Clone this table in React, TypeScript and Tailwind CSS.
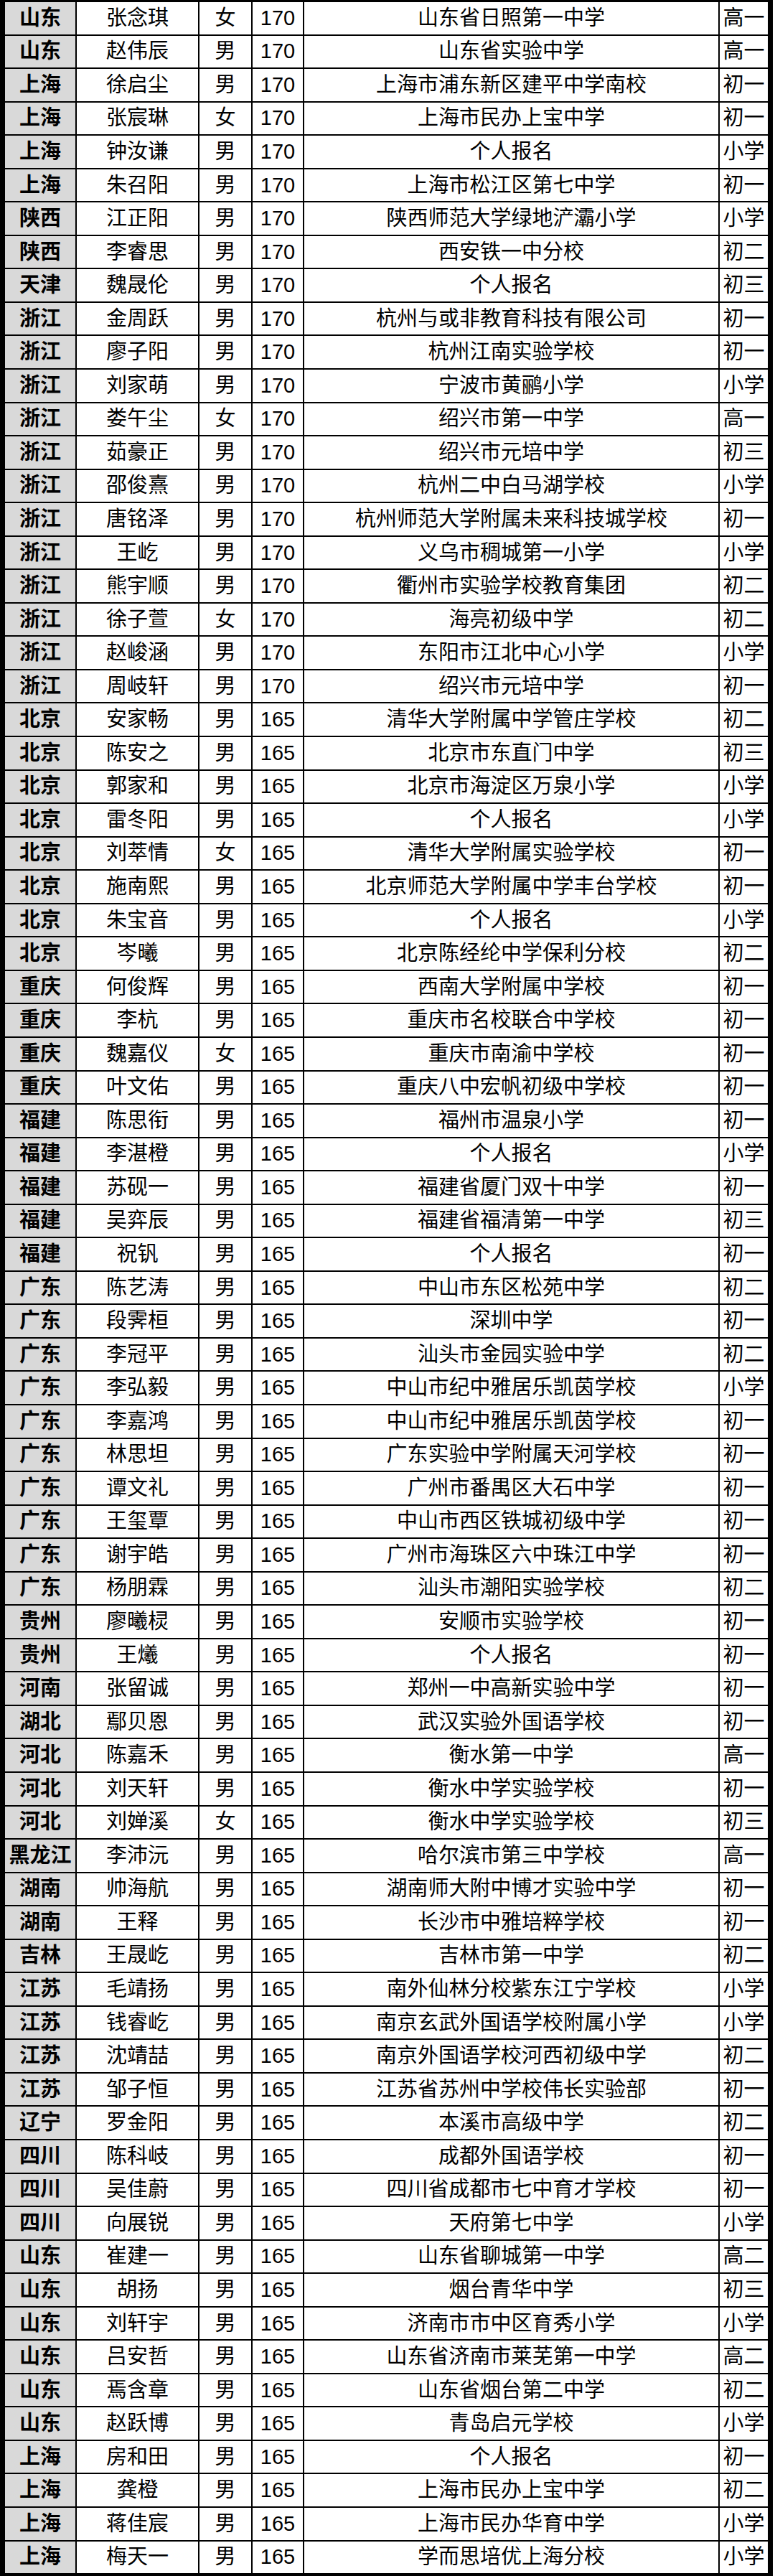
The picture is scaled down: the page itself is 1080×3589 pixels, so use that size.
import React from 'react';

const raw = `山东 张念琪 女 170 山东省日照第一中学 高一
山东 赵伟辰 男 170 山东省实验中学 高一
上海 徐启尘 男 170 上海市浦东新区建平中学南校 初一
上海 张宸琳 女 170 上海市民办上宝中学 初一
上海 钟汝谦 男 170 个人报名 小学
上海 朱召阳 男 170 上海市松江区第七中学 初一
陕西 江正阳 男 170 陕西师范大学绿地浐灞小学 小学
陕西 李睿思 男 170 西安铁一中分校 初二
天津 魏晟伦 男 170 个人报名 初三
浙江 金周跃 男 170 杭州与或非教育科技有限公司 初一
浙江 廖子阳 男 170 杭州江南实验学校 初一
浙江 刘家萌 男 170 宁波市黄鹂小学 小学
浙江 娄午尘 女 170 绍兴市第一中学 高一
浙江 茹豪正 男 170 绍兴市元培中学 初三
浙江 邵俊熹 男 170 杭州二中白马湖学校 小学
浙江 唐铭泽 男 170 杭州师范大学附属未来科技城学校 初一
浙江 王屹 男 170 义乌市稠城第一小学 小学
浙江 熊宇顺 男 170 衢州市实验学校教育集团 初二
浙江 徐子萱 女 170 海亮初级中学 初二
浙江 赵峻涵 男 170 东阳市江北中心小学 小学
浙江 周岐轩 男 170 绍兴市元培中学 初一
北京 安家畅 男 165 清华大学附属中学管庄学校 初二
北京 陈安之 男 165 北京市东直门中学 初三
北京 郭家和 男 165 北京市海淀区万泉小学 小学
北京 雷冬阳 男 165 个人报名 小学
北京 刘萃情 女 165 清华大学附属实验学校 初一
北京 施南熙 男 165 北京师范大学附属中学丰台学校 初一
北京 朱宝音 男 165 个人报名 小学
北京 岑曦 男 165 北京陈经纶中学保利分校 初二
重庆 何俊辉 男 165 西南大学附属中学校 初一
重庆 李杭 男 165 重庆市名校联合中学校 初一
重庆 魏嘉仪 女 165 重庆市南渝中学校 初一
重庆 叶文佑 男 165 重庆八中宏帆初级中学校 初一
福建 陈思衔 男 165 福州市温泉小学 初一
福建 李湛橙 男 165 个人报名 小学
福建 苏砚一 男 165 福建省厦门双十中学 初一
福建 吴弈辰 男 165 福建省福清第一中学 初三
福建 祝钒 男 165 个人报名 初一
广东 陈艺涛 男 165 中山市东区松苑中学 初二
广东 段霁桓 男 165 深圳中学 初一
广东 李冠平 男 165 汕头市金园实验中学 初二
广东 李弘毅 男 165 中山市纪中雅居乐凯茵学校 小学
广东 李嘉鸿 男 165 中山市纪中雅居乐凯茵学校 初一
广东 林思坦 男 165 广东实验中学附属天河学校 初一
广东 谭文礼 男 165 广州市番禺区大石中学 初一
广东 王玺覃 男 165 中山市西区铁城初级中学 初一
广东 谢宇皓 男 165 广州市海珠区六中珠江中学 初一
广东 杨朋霖 男 165 汕头市潮阳实验学校 初二
贵州 廖曦棂 男 165 安顺市实验学校 初一
贵州 王爔 男 165 个人报名 初一
河南 张留诚 男 165 郑州一中高新实验中学 初一
湖北 鄢贝恩 男 165 武汉实验外国语学校 初一
河北 陈嘉禾 男 165 衡水第一中学 高一
河北 刘天轩 男 165 衡水中学实验学校 初一
河北 刘婵溪 女 165 衡水中学实验学校 初三
黑龙江 李沛沅 男 165 哈尔滨市第三中学校 高一
湖南 帅海航 男 165 湖南师大附中博才实验中学 初一
湖南 王释 男 165 长沙市中雅培粹学校 初一
吉林 王晟屹 男 165 吉林市第一中学 初二
江苏 毛靖扬 男 165 南外仙林分校紫东江宁学校 小学
江苏 钱睿屹 男 165 南京玄武外国语学校附属小学 小学
江苏 沈靖喆 男 165 南京外国语学校河西初级中学 初二
江苏 邹子恒 男 165 江苏省苏州中学校伟长实验部 初一
辽宁 罗金阳 男 165 本溪市高级中学 初二
四川 陈科岐 男 165 成都外国语学校 初一
四川 吴佳蔚 男 165 四川省成都市七中育才学校 初一
四川 向展锐 男 165 天府第七中学 小学
山东 崔建一 男 165 山东省聊城第一中学 高二
山东 胡扬 男 165 烟台青华中学 初三
山东 刘轩宇 男 165 济南市市中区育秀小学 小学
山东 吕安哲 男 165 山东省济南市莱芜第一中学 高二
山东 焉含章 男 165 山东省烟台第二中学 初二
山东 赵跃博 男 165 青岛启元学校 小学
上海 房和田 男 165 个人报名 初一
上海 龚橙 男 165 上海市民办上宝中学 初二
上海 蒋佳宸 男 165 上海市民办华育中学 小学
上海 梅天一 男 165 学而思培优上海分校 小学`;

const rows = raw.split('\n').map((line) => line.trim().split(/\s+/));

const cell = 'bg-white flex items-center justify-center whitespace-nowrap';

const App = () => {
  return (
    <div className="w-[1080px] bg-white text-black font-['Liberation_Sans','Noto_Sans_CJK_SC',sans-serif] text-[29px] leading-none">
      <div className="w-[1077px] bg-black pl-[7px] pr-[7px] pt-[3px] pb-[4px]">
        <div className="flex flex-col gap-[2px]">
          {rows.map((r, i) => (
            <div
              key={i}
              className="grid grid-cols-[98px_169px_72px_70px_577px_67px] gap-[2px] h-[44.55px]"
            >
              <div className="bg-[#d9d9d9] flex items-center justify-center font-bold whitespace-nowrap">{r[0]}</div>
              <div className={cell}>{r[1]}</div>
              <div className={cell}>{r[2]}</div>
              <div className={cell}>{r[3]}</div>
              <div className={cell}>{r[4]}</div>
              <div className={cell}>{r[5]}</div>
            </div>
          ))}
        </div>
      </div>
    </div>
  );
};

export default App;
